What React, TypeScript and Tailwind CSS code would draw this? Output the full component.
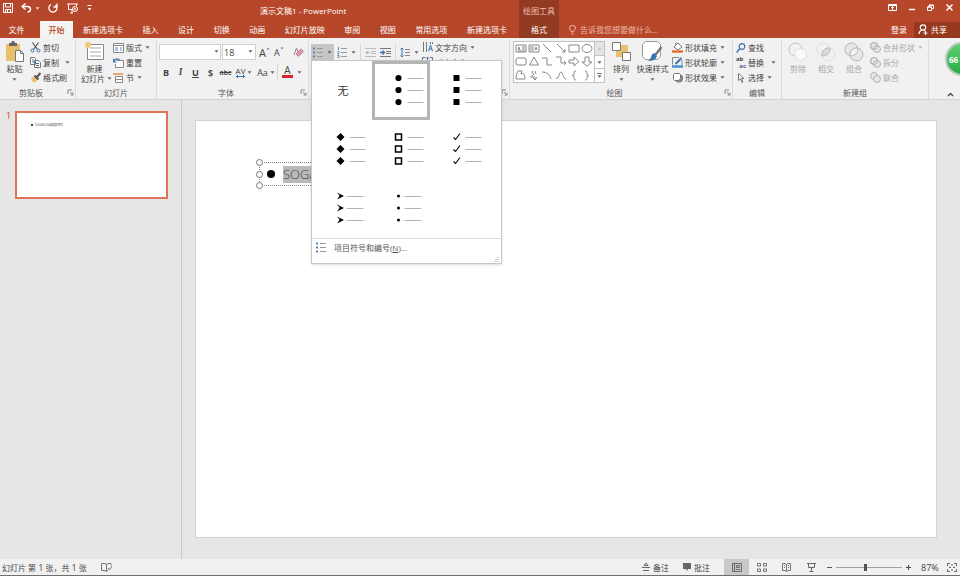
import type { ReactNode } from 'react'

const tabs = ['新建选项卡', '插入', '设计', '切换', '动画', '幻灯片放映', '审阅', '视图', '常用选项', '新建选项卡']

const shapes = [
  'M1 2h10v7H1zM3 7l1-3 1 3M7 4h3M7 6h3M3 8h7',
  'M1 2h10v7H1zM3 3v5M5 3v5M7 7l1-3 1 3',
  'M2 1l8 8',
  'M2 1l8 8M10 6v3H7',
  'M1 2h10v7H1z',
  'M1 5.5a5 4 0 1 0 10 0a5 4 0 1 0 -10 0',
  'M2 2h8l1 1v5l-1 1H2L1 8V3z',
  'M6 1l4.500 8h-9z',
  'M1 2h5v7h5',
  'M1 1h5v6h5M9 5l2 2-2 2',
  'M1 4h5V1l5 4.500L6 10V7H1z',
  'M4 1h4v5h3L6 10 1 6h3z',
  'M3 1h4L6 4c3-1 4 0 4 5H1c0-4 1-6 2-8z',
  'M5 1c-4 2 3 2 0 4s-3 3 0 2 2 1 2 3M5 8l2 2 2-3M7 1l1 3',
  'M1 2c5 0 8 3 9 7',
  'M1 8c3 2 3-6 5-6s2 7 5 7',
  'M8 1C6 1 6 2 6 3c0 2 0 2.500-2 2.500 2 0 2 0.500 2 2.500 0 1 0 2 2 2',
  'M4 1c2 0 2 1 2 2 0 2 0 2.500 2 2.500-2 0-2 0.500-2 2.500 0 1 0 2-2 2',
]

const bulletStyles = ['none', 'disc', 'square', 'diamond', 'box', 'check', 'arrow', 'dot']

function Svg({ w, h, children, className = '' }: { w: number; h: number; children: ReactNode; className?: string }) {
  return (
    <svg width={w} height={h} viewBox={`0 0 ${w} ${h}`} fill="none" stroke="currentColor" className={`shrink-0 ${className}`} aria-hidden="true">
      {children}
    </svg>
  )
}

function Caret({ className = '' }: { className?: string }) {
  return (
    <Svg w={5} h={3} className={`opacity-80 ${className}`}>
      <path d="M0.500 0.300h4l-2 2.400z" fill="currentColor" stroke="none" />
    </Svg>
  )
}

function Group({ label, launcher, className, children }: { label: string; launcher?: boolean; className: string; children: ReactNode }) {
  return (
    <section aria-label={label} className={`flex shrink-0 flex-col border-r border-[#dcdcdc] ${className}`}>
      <div className="flex h-[45px]">{children}</div>
      <div className="flex h-3.5 items-center text-[#5a5a5a]">
        <span className="flex-1 text-center">{label}</span>
        {launcher && (
          <button aria-label={`${label}设置`} className="mr-px flex w-3 justify-end pt-px">
            <Svg w={7} h={7}>
              <path d="M1 5V1h4M3 3l3 3M6 3.500V6H3.500" stroke="#888" />
            </Svg>
          </button>
        )}
      </div>
    </section>
  )
}

function Small({ icon, label, caret, disabled, className = '' }: { icon: ReactNode; label: string; caret?: boolean; disabled?: boolean; className?: string }) {
  return (
    <button disabled={disabled} className={`flex h-[15px] items-center gap-0.5 whitespace-nowrap ${disabled ? 'text-[#a8a8a8]' : ''} ${className}`}>
      {icon}
      <span>{label}</span>
      {caret && <Caret className="ml-px" />}
    </button>
  )
}

function Big({ icon, label, caret, disabled, className = '' }: { icon: ReactNode; label: string; caret?: boolean; disabled?: boolean; className?: string }) {
  return (
    <button disabled={disabled} className={`flex flex-col items-center whitespace-nowrap ${disabled ? 'text-[#a8a8a8]' : ''} ${className}`}>
      <span className="flex h-[23px] items-center">{icon}</span>
      <span className="h-3">{label}</span>
      {caret && <Caret className="mt-[3px]" />}
    </button>
  )
}

function Header() {
  return (
    <header className="flex h-[38px] shrink-0 bg-[#b7472a] text-white">
      <div className="flex w-[519px] shrink-0 flex-col">
        <div className="flex h-5 items-center">
          <div className="flex flex-1 items-center pb-1">
            <button aria-label="保存" className="ml-[3px]">
              <Svg w={10} h={10}>
                <path d="M0.500 0.500h9v9h-9zM2.500 1v3h5V1M2.500 9.500V6.500h5v3M4.500 7v2" />
              </Svg>
            </button>
            <button aria-label="撤消" className="ml-2 flex items-center gap-[3px]">
              <Svg w={11} h={10}>
                <path d="M4.500 0.500L1 3.500l3.500 3M1 3.500h5.500c4 0 4 5.500 0 5.500" strokeWidth="1.400" />
              </Svg>
              <Caret />
            </button>
            <button aria-label="重做" className="ml-2">
              <Svg w={10} h={10}>
                <path d="M3 1.500A4 4 0 1 0 7.500 2M9 0.500v3.500H5.500" strokeWidth="1.300" />
              </Svg>
            </button>
            <button aria-label="从头开始" className="ml-[9px]">
              <Svg w={12} h={11}>
                <path d="M0 1h11M1.500 1v5.500H5M9.500 1v2M5 7v3M3 10h3" />
                <circle cx="8" cy="6" r="2.500" />
                <path d="M7.500 5l1.500 1-1.500 1z" fill="white" strokeWidth="0.500" />
              </Svg>
            </button>
            <button aria-label="自定义快速访问工具栏" className="ml-2">
              <Svg w={5} h={6}>
                <path d="M0.500 0.500h4" />
                <path d="M0.500 3h4l-2 2.400z" fill="white" stroke="none" />
              </Svg>
            </button>
          </div>
          <h1 className="w-[259px]">演示文稿1 - PowerPoint</h1>
        </div>
        <nav className="flex flex-1 items-stretch">
          <button className="w-10 pr-[7px] text-center">文件</button>
          <button className="mt-px w-[33px] bg-[#f4f4f2] pb-px font-medium text-[#b7472a]">开始</button>
          <div className="ml-2.5 flex w-[424px] justify-between">
            {tabs.map((tab, i) => (
              <button key={i}>{tab}</button>
            ))}
          </div>
        </nav>
      </div>
      <div className="flex w-10 shrink-0 flex-col items-center bg-[#933a22]">
        <span className="flex h-5 items-center text-[#eebfae]">绘图工具</span>
        <button className="flex-1">格式</button>
      </div>
      <div className="flex flex-1 flex-col">
        <div className="flex h-[15px] items-center justify-end gap-2.5 pr-[7px]">
          <button aria-label="功能区显示选项">
            <Svg w={9} h={7}>
              <path d="M0.500 0.500h8v6h-8zM0.500 1.500h8M4.500 6V3M3 4l1.500-1.500L6 4" />
            </Svg>
          </button>
          <button aria-label="最小化" className="pl-0.5">
            <Svg w={6} h={7}>
              <path d="M0 5.500h6" strokeWidth="1.500" />
            </Svg>
          </button>
          <button aria-label="还原" className="pl-0.5">
            <Svg w={7} h={7}>
              <path d="M0.500 3h4v3.500h-4zM2 3V1h4.500v3.500h-2M0.500 3h4M2 1.200h4" />
            </Svg>
          </button>
          <button aria-label="关闭" className="pl-0.5">
            <Svg w={7} h={7}>
              <path d="M0.500 0.500l6 6M6.500 0.500l-6 6" strokeWidth="1.500" />
            </Svg>
          </button>
        </div>
        <div className="mt-[7px] flex flex-1">
          <button className="flex items-center gap-1 pb-px pl-2.5 text-[#eeb9a8]">
            <Svg w={7} h={10}>
              <path d="M2.500 7C2.500 5 0.500 5 0.500 3a3 2.500 0 0 1 6 0c0 2-2 2-2 4zM2.500 9h2" />
            </Svg>
            告诉我您想要做什么...
          </button>
          <button className="ml-auto mr-[7px] pb-px">登录</button>
          <button className="flex w-[46px] items-center gap-[3px] bg-[#97391f] pb-px pl-1">
            <Svg w={10} h={11}>
              <circle cx="5" cy="3.500" r="2.700" strokeWidth="1.200" />
              <path d="M1 10c0-2.500 1.500-3.500 3-4M6 6l1 1M5.500 9h4M7.500 7v4" strokeWidth="1.200" />
            </Svg>
            共享
          </button>
        </div>
      </div>
    </header>
  )
}

function BulletSample({ kind }: { kind: string }) {
  const small = kind === 'arrow' || kind === 'dot'
  return (
    <Svg w={58} h={59}>
      {[17, 29, 41].map(y => (
        <g key={y} transform={`translate(26.5 ${y})`}>
          {kind === 'disc' && <circle r="3.100" fill="black" stroke="none" />}
          {kind === 'square' && <path d="M-3-3h6v6h-6z" fill="black" stroke="none" />}
          {kind === 'diamond' && <path d="M0-4l4 4-4 4-4-4z" fill="black" stroke="none" />}
          {kind === 'box' && <path d="M-3-3h6v6h-6z" stroke="black" strokeWidth="1.500" />}
          {kind === 'check' && <path d="M-3 0.500l2 2L3.500-3.500" stroke="black" strokeWidth="1.100" />}
          {kind === 'arrow' && <path d="M-3.500-3.500L3.500 0l-7 3.500L-1 0z" fill="black" stroke="none" />}
          {kind === 'arrow' && <path d="M-3-2.300L-0.500-0.700h-1.500z" fill="white" stroke="none" />}
          {kind === 'dot' && <circle r="1.500" fill="black" stroke="none" />}
          <path d={small ? 'M6 0.500h17' : 'M9 0.500h16'} stroke="#b4b4b4" />
        </g>
      ))}
    </Svg>
  )
}

function BulletMenu() {
  return (
    <div role="menu" className="absolute left-0 top-full z-20 w-[191px] border border-[#c6c6c6] bg-white shadow-sm">
      <div className="grid grid-cols-[58px_58px_58px] pl-0.5">
        {bulletStyles.map(kind => (
          <button
            key={kind}
            role="menuitem"
            aria-label={kind}
            className={`flex h-[59px] items-center justify-center ${kind === 'disc' ? 'outline-[3px] -outline-offset-3 outline-[#b5b5b5]' : ''}`}
          >
            {kind === 'none' ? <span className="text-[11px] text-[#333]">无</span> : <BulletSample kind={kind} />}
          </button>
        ))}
      </div>
      <button role="menuitem" className="flex h-[18px] w-full items-center gap-2 border-t border-[#dedede] pl-1 text-[#555]">
        <ListIcon />
        <span>项目符号和编号(<u>N</u>)...</span>
      </button>
      <div className="flex h-[7px] items-end justify-end pb-px pr-0.5">
        <Svg w={5} h={5}>
          <path d="M4 0v1M4 2v1M4 4v1M2 2v1M2 4v1M0 4v1" stroke="#999" />
        </Svg>
      </div>
    </div>
  )
}

function ListIcon() {
  return (
    <Svg w={10} h={11}>
      <path d="M0 1.500h2M0 5.500h2M0 9.500h2" stroke="#5d83b0" strokeWidth="2" />
      <path d="M4 1.500h6M4 5.500h6M4 9.500h6" stroke="#999" />
    </Svg>
  )
}

function Divider() {
  return <span className="h-4 w-px shrink-0 bg-[#d8d8d8]" />
}

function Clipboard() {
  return (
    <Group label="剪贴板" launcher className="w-[76px]">
      <Big
        className="w-[29px]"
        label="粘贴"
        caret
        icon={
          <Svg w={20} h={22}>
            <path d="M1 3h14v17H1z" fill="#eabf6c" stroke="none" />
            <path d="M4 2h2l1-2h2l1 2h2v3H4z" fill="#666" stroke="none" />
            <path d="M10.500 9.500h5l3 3v8h-8z" fill="white" stroke="#777" />
            <path d="M15.500 9.500v3h3" stroke="#777" />
          </Svg>
        }
      />
      <div className="flex flex-col pl-px">
        <Small
          label="剪切"
          icon={
            <Svg w={11} h={11}>
              <path d="M2.500 0.500l5 7M8.500 0.500l-5 7" stroke="#555" strokeWidth="1.200" />
              <circle cx="2.500" cy="8.500" r="1.500" stroke="#3b74b5" />
              <circle cx="8.500" cy="8.500" r="1.500" stroke="#3b74b5" />
            </Svg>
          }
        />
        <div className="flex items-center gap-1.5">
          <Small
            label="复制"
            icon={
              <Svg w={11} h={11}>
                <path d="M0.500 0.500h4l1 1v6h-5zM4.500 3.500h4l2 2v5h-6z" fill="white" stroke="#777" />
                <path d="M2 3h2M2 5h2M6 6.500h3M6 8.500h3" stroke="#3b74b5" />
              </Svg>
            }
          />
          <Caret />
        </div>
        <Small
          label="格式刷"
          icon={
            <Svg w={11} h={11}>
              <path d="M1 6l4-2 3 3-3 3.500c-2 0-3-1-4-4.500z" fill="#eabf6c" stroke="none" />
              <path d="M4.500 3.500l4 4M7 5l3.500-4" stroke="#555" strokeWidth="2" />
            </Svg>
          }
        />
      </div>
    </Group>
  )
}

function Slides() {
  return (
    <Group label="幻灯片" className="w-[81px]">
      <button className="flex w-[37px] flex-col items-center whitespace-nowrap">
        <span className="flex h-[23px] items-center">
          <Svg w={20} h={19}>
            <path d="M2.500 2.500h16v15h-16z" fill="white" stroke="#888" />
            <path d="M5 6h11M5 10h11M5 14h11" stroke="#aaa" />
            <circle cx="3" cy="3" r="3" fill="#f0cb7a" stroke="none" />
          </Svg>
        </span>
        <span className="h-2.5">新建</span>
        <span className="flex h-2.5 items-center gap-0.5 pl-1">幻灯片 <Caret /></span>
      </button>
      <div className="flex flex-col">
        <Small
          label="版式"
          caret
          icon={
            <Svg w={11} h={10}>
              <path d="M0.500 0.500h10v9h-10z" fill="white" stroke="#888" />
              <path d="M0.500 2.500h10" stroke="#888" />
              <path d="M2 5h3M2 7h3M7 5h2M7 7h2" stroke="#5b8ac2" />
            </Svg>
          }
        />
        <Small
          label="重置"
          icon={
            <Svg w={11} h={10}>
              <path d="M3.500 2.500h7v7h-8V6" fill="white" stroke="#888" />
              <path d="M0.500 1v3h3M0.500 4c1-3 4-4 6-2" stroke="#3b74b5" strokeWidth="1.200" />
            </Svg>
          }
        />
        <Small
          label="节"
          caret
          icon={
            <Svg w={11} h={10}>
              <path d="M0 1h10" stroke="#e58a4e" strokeWidth="1.500" />
              <path d="M2.500 3.500h7v6h-7zM2.500 6.500h7" fill="white" stroke="#888" />
            </Svg>
          }
        />
      </div>
    </Group>
  )
}

function Font() {
  return (
    <Group label="字体" launcher className="w-[152px]">
      <div className="flex flex-col pl-0.5">
        <div className="mt-1 flex h-4 items-center">
          <label className="relative">
            <select aria-label="字体" className="block h-4 w-[62px] appearance-none border border-[#d0d0d0] bg-white" />
            <Caret className="absolute right-0.5 top-1.5" />
          </label>
          <label className="relative ml-px">
            <select aria-label="字号" defaultValue="18" className="block h-4 w-[34px] appearance-none border border-[#d0d0d0] bg-white pl-px text-[9px]">
              <option>18</option>
            </select>
            <Caret className="absolute right-[3px] top-1.5" />
          </label>
          <button aria-label="增大字号" className="ml-[3px] flex w-[15px] items-start text-[11px]">
            A
            <Svg w={4} h={3}>
              <path d="M0.500 2.500l1.500-2 1.500 2z" fill="#777" stroke="none" />
            </Svg>
          </button>
          <button aria-label="减小字号" className="flex w-[15px] items-start text-[9px]">
            A
            <Svg w={4} h={3}>
              <path d="M0.500 0.500l1.500 2 1.500-2z" fill="#777" stroke="none" />
            </Svg>
          </button>
          <button aria-label="清除所有格式" className="ml-1">
            <Svg w={11} h={11}>
              <path d="M1 8l2.500-7L6 8" stroke="#a08088" />
              <path d="M3 7l5-5 2.500 2.500-5 5z" fill="#dd9aaa" stroke="#c87f90" />
            </Svg>
          </button>
        </div>
        <div className="mt-[3px] flex h-[18px] items-center text-[9px]">
          <button className="w-3.5 font-bold">B</button>
          <button className="w-[15px] font-serif font-bold italic">I</button>
          <button className="w-[15px] font-bold underline">U</button>
          <button className="w-[15px] font-bold text-shadow-xs">S</button>
          <button className="w-[15px] text-[7px] font-semibold line-through">abc</button>
          <button className="flex w-[22px] items-center justify-center gap-0.5 text-[8px]">
            <span className="flex flex-col items-center leading-[8px]">
              AV
              <Svg w={9} h={3}>
                <path d="M0 1.500h9M2 0L0.500 1.500 2 3M7 0l1.500 1.500L7 3" stroke="#3b74b5" />
              </Svg>
            </span>
            <Caret />
          </button>
          <button className="flex w-[22px] items-center justify-center gap-0.5">Aa <Caret /></button>
          <Divider />
          <button aria-label="字体颜色" className="flex w-[28px] items-center justify-center gap-1">
            <span className="w-[11px] border-b-[3px] border-[#d8212c] text-[10px] leading-[9px]">A</span>
            <Caret />
          </button>
        </div>
      </div>
    </Group>
  )
}

function Paragraph() {
  return (
    <Group label="段落" launcher className="w-[201px]">
      <div className="mt-1 flex h-4 items-center pl-0.5">
        <div className="relative">
          <button aria-label="项目符号" aria-expanded="true" className="flex h-4 w-[23px] items-center justify-center gap-1 bg-[#c6c6c6]">
            <ListIcon />
            <Caret />
          </button>
          <BulletMenu />
        </div>
        <button aria-label="编号" className="flex w-[26px] items-center gap-1 pl-[3px]">
          <Svg w={10} h={11}>
            <path d="M1.500 0v3M0.500 4.500h1.500v1L0.500 7H2M0.500 8.500H2v2H0.500" stroke="#5d83b0" />
            <path d="M4 1.500h6M4 5.500h6M4 9.500h6" stroke="#999" />
          </Svg>
          <Caret />
        </button>
        <Divider />
        <button aria-label="减少缩进" className="ml-1">
          <Svg w={11} h={9}>
            <path d="M0 0.500h11M6 3.500h5M6 5.500h5M0 8.500h11" stroke="#bbb" />
            <path d="M5 4.500H1M3 2.500l-2 2 2 2" stroke="#9ab4d0" />
          </Svg>
        </button>
        <button aria-label="增加缩进" className="ml-1">
          <Svg w={11} h={9}>
            <path d="M0 0.500h11M6 3.500h5M6 5.500h5M0 8.500h11" stroke="#777" />
            <path d="M0 4.500h4M2.500 2.500l2 2-2 2" stroke="#3b74b5" strokeWidth="1.300" />
          </Svg>
        </button>
        <span className="ml-1 flex"><Divider /></span>
        <button aria-label="行距" className="ml-1 flex items-center gap-1">
          <Svg w={10} h={11}>
            <path d="M2 1v9M0.500 2.500L2 1l1.500 1.500M0.500 8.500L2 10l1.500-1.500" stroke="#3b74b5" />
            <path d="M5 2.500h5M5 5.500h5M5 8.500h5" stroke="#888" />
          </Svg>
          <Caret />
        </button>
      </div>
      <div className="ml-[3px] flex flex-col">
        <Small
          label="文字方向"
          caret
          icon={
            <Svg w={11} h={11}>
              <path d="M1.500 0v10M4.500 0v10M10.500 0v2" stroke="#777" />
              <path d="M6.500 9l2-6 2 6M7 7h3M8.500 0v2" stroke="#3b74b5" />
            </Svg>
          }
        />
        <Small
          label="对齐文本"
          caret
          icon={
            <Svg w={11} h={11}>
              <path d="M3 0.500H0.500v10H3M8 0.500h2.500v10H8M3 5.500h5" stroke="#777" />
              <path d="M5.500 0v4M4 1.500L5.500 0 7 1.500" stroke="#3b74b5" />
            </Svg>
          }
        />
      </div>
    </Group>
  )
}

function Drawing() {
  return (
    <Group label="绘图" launcher className="w-[223px]">
      <div className="ml-[3px] mt-px flex h-[42px] w-[92px] shrink-0 border border-[#c3c3c3] bg-white">
        <div className="grid flex-1 grid-cols-6 items-center justify-items-center text-[#888]">
          {shapes.map(d => (
            <button key={d} aria-label="形状">
              <Svg w={12} h={11}>
                <path d={d} />
              </Svg>
            </button>
          ))}
        </div>
        <div className="flex w-2.5 flex-col border-l border-[#c3c3c3]">
          <button aria-label="上一行" className="flex flex-1 items-center justify-center bg-[#e4e4e4] text-[#bbb]"><Caret className="rotate-180" /></button>
          <button aria-label="下一行" className="flex flex-1 items-center justify-center border-y border-[#c3c3c3]"><Caret /></button>
          <button aria-label="其他" className="flex flex-1 flex-col items-center justify-center gap-px">
            <span className="h-px w-[5px] bg-[#777]" />
            <Caret />
          </button>
        </div>
      </div>
      <Big
        className="ml-0.5 w-7"
        label="排列"
        caret
        icon={
          <Svg w={19} h={19}>
            <path d="M4 3h12v12H4z" fill="#eabf6c" stroke="none" />
            <path d="M0.500 0.500h8v8h-8zM10.500 10.500h8v8h-8z" fill="white" stroke="#777" />
          </Svg>
        }
      />
      <Big
        className="w-[35px]"
        label="快速样式"
        caret
        icon={
          <Svg w={21} h={21}>
            <path d="M3.500 0.500h12l3 3v12l-3 3h-12l-3-3v-12z" fill="white" stroke="#999" />
            <path d="M19.500 6l-7 9" stroke="#777" strokeWidth="2.500" />
            <path d="M12 12l3 3c-1 4-5 5-9 5 4-2 2-6 6-8z" fill="#3b74b5" stroke="none" />
          </Svg>
        }
      />
      <div className="ml-0.5 flex flex-col">
        <Small
          label="形状填充"
          caret
          icon={
            <Svg w={11} h={11}>
              <path d="M2 5l4-4 4 4-4 3zM4 3V0.500" fill="white" stroke="#777" />
              <path d="M0 9.500h11" stroke="#e0722e" strokeWidth="2.500" />
            </Svg>
          }
        />
        <Small
          label="形状轮廓"
          caret
          icon={
            <Svg w={11} h={11}>
              <path d="M7 0.500H0.500v7M10 3v5" stroke="#888" />
              <path d="M3.500 7l6-6" stroke="#3b74b5" strokeWidth="2" />
              <path d="M0 9.500h11" stroke="#4c8ed0" strokeWidth="2.500" />
            </Svg>
          }
        />
        <Small
          label="形状效果"
          caret
          icon={
            <Svg w={11} h={11}>
              <path d="M3 8l2 2h4l1.500-2V4L9 3" fill="#888" stroke="#888" />
              <path d="M2.500 1.500h5l1 1v4l-2 2h-4l-1-1v-5z" fill="white" stroke="#777" />
            </Svg>
          }
        />
      </div>
    </Group>
  )
}

function Editing() {
  return (
    <Group label="编辑" className="w-[49px]">
      <div className="flex flex-col pl-[3px]">
        <Small
          label="查找"
          icon={
            <Svg w={10} h={10}>
              <circle cx="6" cy="3.500" r="2.800" stroke="#3b74b5" strokeWidth="1.200" />
              <path d="M4 5.500L0.500 9.500" stroke="#3b74b5" strokeWidth="1.500" />
            </Svg>
          }
        />
        <div className="flex items-center gap-[7px]">
          <Small
            label="替换"
            icon={
              <span className="flex w-2.5 flex-col text-[6px] font-bold leading-[7px]">
                <span className="text-left">ab</span>
                <span className="text-right text-[#6a4a9a]">ac</span>
              </span>
            }
          />
          <Caret />
        </div>
        <Small
          label="选择"
          caret
          icon={
            <Svg w={10} h={10}>
              <path d="M2.500 0.500v7l2-1.500 1.500 3.500 1-0.500L5.500 5.500H8z" fill="white" stroke="#777" />
            </Svg>
          }
        />
      </div>
    </Group>
  )
}

function Merge() {
  return (
    <Group label="新建组" className="w-[147px]">
      <Big
        className="ml-0.5 w-7"
        label="剪除"
        disabled
        icon={
          <Svg w={20} h={20}>
            <circle cx="7.500" cy="7.500" r="6.500" stroke="#c4c4c4" />
            <circle cx="12.500" cy="12.500" r="6" fill="#fafafa" stroke="#dedede" />
          </Svg>
        }
      />
      <Big
        className="w-7"
        label="相交"
        disabled
        icon={
          <Svg w={20} h={20}>
            <circle cx="7.500" cy="7.500" r="6.500" stroke="#dedede" />
            <circle cx="12.500" cy="12.500" r="6.500" stroke="#dedede" />
            <path d="M13.700 6.100a6.500 6.500 0 0 1-7.600 7.600a6.500 6.500 0 0 1 7.600-7.600z" fill="#dcdcdc" stroke="#bcbcbc" />
          </Svg>
        }
      />
      <Big
        className="w-7"
        label="组合"
        disabled
        icon={
          <Svg w={20} h={20}>
            <circle cx="7.500" cy="7.500" r="6.500" fill="#e6e6e6" stroke="#b8b8b8" />
            <circle cx="12.500" cy="12.500" r="6.500" fill="#e6e6e6" stroke="#b8b8b8" />
            <path d="M13.700 6.100a6.500 6.500 0 0 1-7.600 7.600a6.500 6.500 0 0 1 7.600-7.600z" fill="#f4f4f4" stroke="#b8b8b8" />
          </Svg>
        }
      />
      <div className="ml-0.5 flex flex-col">
        {['合并形状', '拆分', '联合'].map((label, i) => (
          <Small
            key={label}
            label={label}
            caret={i === 0}
            disabled
            icon={
              <Svg w={11} h={11}>
                <circle cx="4" cy="4" r="3.500" fill="#e6e6e6" stroke="#b4b4b4" />
                <circle cx="7" cy="7" r="3.500" fill="#e6e6e6" stroke="#b4b4b4" />
                {i < 2 && <circle cx="4" cy="4" r="3.500" stroke="#b4b4b4" />}
              </Svg>
            }
          />
        ))}
      </div>
    </Group>
  )
}

function Ribbon() {
  return (
    <div className="relative z-10 flex shrink-0 border-b border-[#d2d2d2] bg-[#f1f1f1] pt-0.5 text-[#444]">
      <Clipboard />
      <Slides />
      <Font />
      <Paragraph />
      <Drawing />
      <Editing />
      <Merge />
      <div className="flex flex-1 items-end justify-end pb-0.5 pr-1.5">
        <button aria-label="折叠功能区">
          <Svg w={7} h={5}>
            <path d="M1 4l2.500-2.500L6 4" strokeWidth="1.300" />
          </Svg>
        </button>
      </div>
      {/* Floating speed ball, half off screen */}
      <div className="absolute inset-y-0 right-0 flex w-[15px] items-center overflow-hidden pb-[19px]">
        <div className="flex size-[34px] shrink-0 items-center rounded-full border-2 border-[#b9c9bb] bg-linear-to-b from-[#5fd070] to-[#22ad45] pl-0.5 text-[8px] font-bold text-white">
          66
        </div>
      </div>
    </div>
  )
}

function Handles() {
  return (
    <span className="absolute inset-y-[-4px] left-[-4px] flex flex-col justify-between">
      {[0, 1, 2].map(i => (
        <span key={i} className="size-[7px] rounded-full border border-[#777] bg-white" />
      ))}
    </span>
  )
}

function Workspace() {
  return (
    <main className="flex min-h-0 flex-1 bg-[#e6e6e6]">
      <aside className="flex w-[182px] shrink-0 items-start gap-1 border-r border-[#c8c8c8] pl-1.5 pt-[11px]">
        <span className="w-[5px] text-[9px] leading-[9px] text-[#d0492c]">1</span>
        <button aria-label="幻灯片 1" className="flex h-[88px] w-[153px] items-start gap-0.5 border-2 border-[#de7459] bg-white pl-3.5 pt-2.5">
          <span className="mt-px size-0.5 rounded-full bg-black" />
          <span className="text-[3px] leading-[4px] text-[#555]">SOGASOGA搜搜百科</span>
        </button>
      </aside>
      <div className="flex flex-1 pb-[21px] pl-[13px] pr-[23px] pt-5">
        <div className="relative flex-1 border border-[#d2d2d2] bg-white">
          <div className="absolute left-[63px] top-[41px] flex h-6 w-[200px] items-center border border-l-solid border-dotted border-[#888] pl-[7px]">
            <Handles />
            <span className="size-2 shrink-0 rounded-full bg-black" />
            <span className="ml-2 bg-[#b9b9b9] font-['Open_Sans'] text-[13px] font-light leading-[17px] text-[#444]">SOGASOGA</span>
          </div>
        </div>
      </div>
    </main>
  )
}

function StatusBar() {
  return (
    <footer className="flex h-[17px] shrink-0 items-center border-b border-[#6e6e6e] bg-[#f1f1f1] text-[#444]">
      <span className="pl-0.5">幻灯片 第 <span className="text-[9px]">1</span> 张，共 <span className="text-[9px]">1</span> 张</span>
      <button aria-label="拼写检查" className="ml-3.5">
        <Svg w={11} h={9}>
          <path d="M5.500 1.500L4 0.500H0.500v7H4l1.500 1 1.500-1M5.500 1.500v7M5.500 1.500L7 0.500h3v2M7 5l1.500 2L11 3" stroke="#777" />
        </Svg>
      </button>
      <div className="ml-auto flex h-full items-center">
        <button className="flex items-center gap-[3px]">
          <Svg w={8} h={8}>
            <path d="M0 4.500h8M1 7.500h6M4 0L2 2.500h4z" stroke="#666" />
          </Svg>
          备注
        </button>
        <button className="ml-3.5 flex items-center gap-[3px]">
          <Svg w={8} h={8}>
            <path d="M0 0h8v6H5L4 8 3 6H0z" fill="#666" stroke="none" />
          </Svg>
          批注
        </button>
        <button aria-label="普通视图" className="ml-3.5 flex h-full w-[25px] items-center justify-center bg-[#c9c9c9]">
          <Svg w={10} h={9}>
            <path d="M0.500 0.500h9v8h-9zM2.500 0.500v8M4.500 2.500h3v2h-3zM4 6.500h4" stroke="#666" />
          </Svg>
        </button>
        <button aria-label="幻灯片浏览" className="flex w-[25px] justify-center">
          <Svg w={10} h={9}>
            <path d="M0.500 0.500h3v2.500h-3zM6.500 0.500h3v2.500h-3zM0.500 6h3v2.500h-3zM6.500 6h3v2.500h-3z" stroke="#777" />
          </Svg>
        </button>
        <button aria-label="阅读视图" className="flex w-[25px] justify-center">
          <Svg w={9} h={9}>
            <path d="M4.500 1.500L3 0.500H0.500v7H3l1.500 1 1.500-1h2.500v-7H6zv7M2 2.500h1M2 4.500h1M6 2.500h1M6 4.500h1" stroke="#777" />
          </Svg>
        </button>
        <button aria-label="幻灯片放映" className="flex w-[25px] justify-center">
          <Svg w={9} h={9}>
            <path d="M0 0.500h9M1.500 0.500v4h6v-4M4.500 4.500v4M2.500 8.500h4" stroke="#666" />
          </Svg>
        </button>
        <button aria-label="缩小" className="ml-[3px] h-px w-[5px] bg-[#555]" />
        <input
          type="range"
          aria-label="显示比例"
          defaultValue={45}
          className="mx-1 h-px w-[66px] appearance-none bg-[#a0a0a0] [&::-webkit-slider-thumb]:h-[7px] [&::-webkit-slider-thumb]:w-[3px] [&::-webkit-slider-thumb]:appearance-none [&::-webkit-slider-thumb]:bg-[#555]"
        />
        <button aria-label="放大">
          <Svg w={5} h={5}>
            <path d="M0 2.500h5M2.500 0v5" />
          </Svg>
        </button>
        <span className="w-9 pl-2.5 text-[9px]">87%</span>
        <button aria-label="适应窗口" className="mr-[3px]">
          <Svg w={10} h={9}>
            <path d="M0.500 3V0.500H3M7 0.500h2.500V3M9.500 6v2.500H7M3 8.500H0.500V6M5 1v2M5 6v2M2 4.500h2M6 4.500h2" stroke="#666" />
          </Svg>
        </button>
      </div>
    </footer>
  )
}

export default function App() {
  return (
    <div className="flex h-screen flex-col overflow-hidden font-['Open_Sans','Noto_Sans_CJK_SC',sans-serif] text-[8px] leading-[11px]">
      <Header />
      <Ribbon />
      <Workspace />
      <StatusBar />
    </div>
  )
}
